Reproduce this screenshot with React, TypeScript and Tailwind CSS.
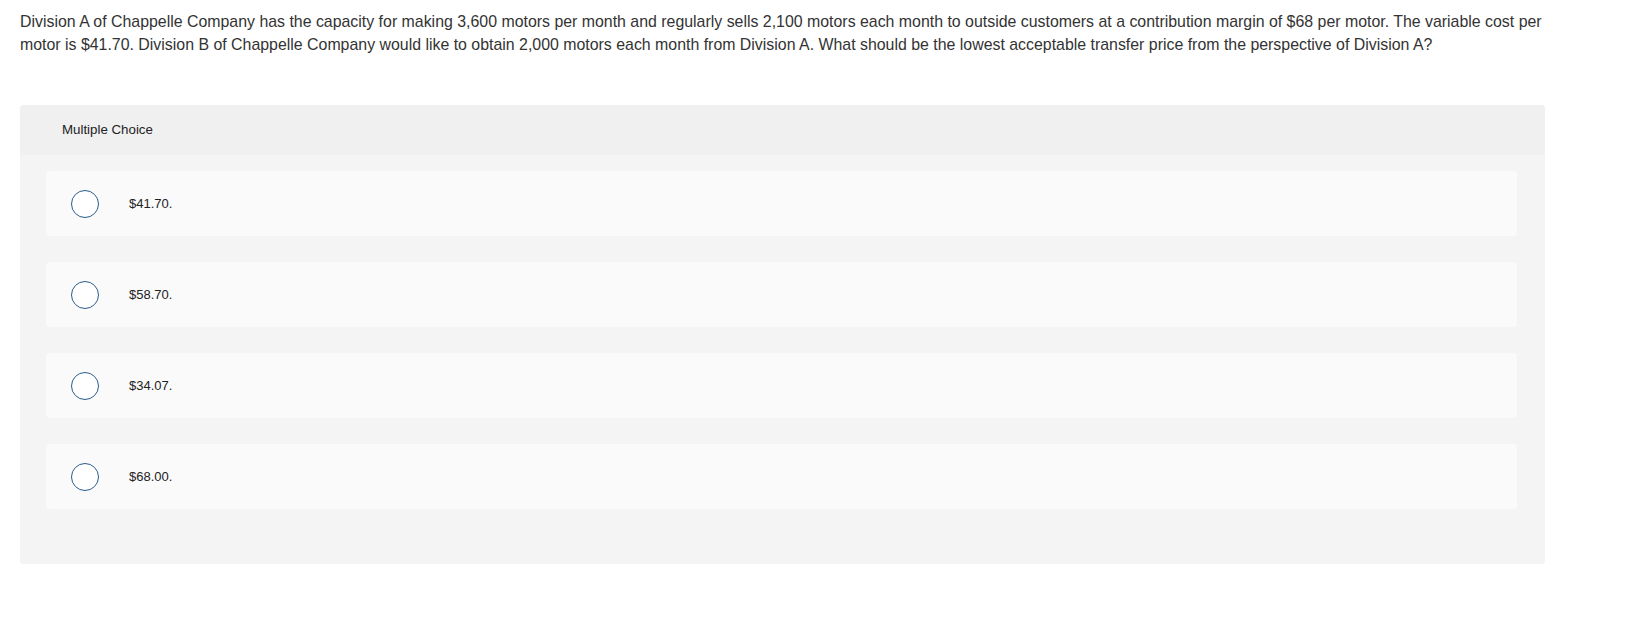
import React from 'react';

const OPTIONS = ['$41.70.', '$58.70.', '$34.07.', '$68.00.'];

const App: React.FC = () => {
  return (
    <div className="min-h-screen bg-white pt-[10px] px-5 text-[#333333] font-['Liberation_Sans',Arial,sans-serif]">
      {/* Question */}
      <p className="text-[15.9px] leading-[23px]">
        Division A of Chappelle Company has the capacity for making 3,600 motors per month and regularly sells 2,100 motors each month to outside customers at a contribution margin of $68 per motor. The variable cost per
        <br />
        motor is $41.70. Division B of Chappelle Company would like to obtain 2,000 motors each month from Division A. What should be the lowest acceptable transfer price from the perspective of Division A?
      </p>

      {/* Multiple choice panel */}
      <section className="mt-[49px] w-[1525px] rounded-[4px] bg-[#f4f4f4] overflow-hidden">
        <div className="h-[50px] bg-[#f0f0f0] flex items-center pl-[42px]">
          <span className="text-[13.3px] text-[#222]">Multiple Choice</span>
        </div>
        <div className="pt-4 pb-[55px] pl-[26px] pr-[28px] flex flex-col gap-[26px]">
          {OPTIONS.map((opt) => (
            <label
              key={opt}
              className="h-[65px] rounded-[4px] bg-[#fafafa] flex items-center pl-[25px] cursor-pointer"
            >
              <span className="w-[28px] h-[28px] rounded-full border-[1.5px] border-[#2a5d8c] bg-white shrink-0" />
              <span className="ml-[30px] text-[13px] text-[#222]">{opt}</span>
            </label>
          ))}
        </div>
      </section>
    </div>
  );
};

export default App;
